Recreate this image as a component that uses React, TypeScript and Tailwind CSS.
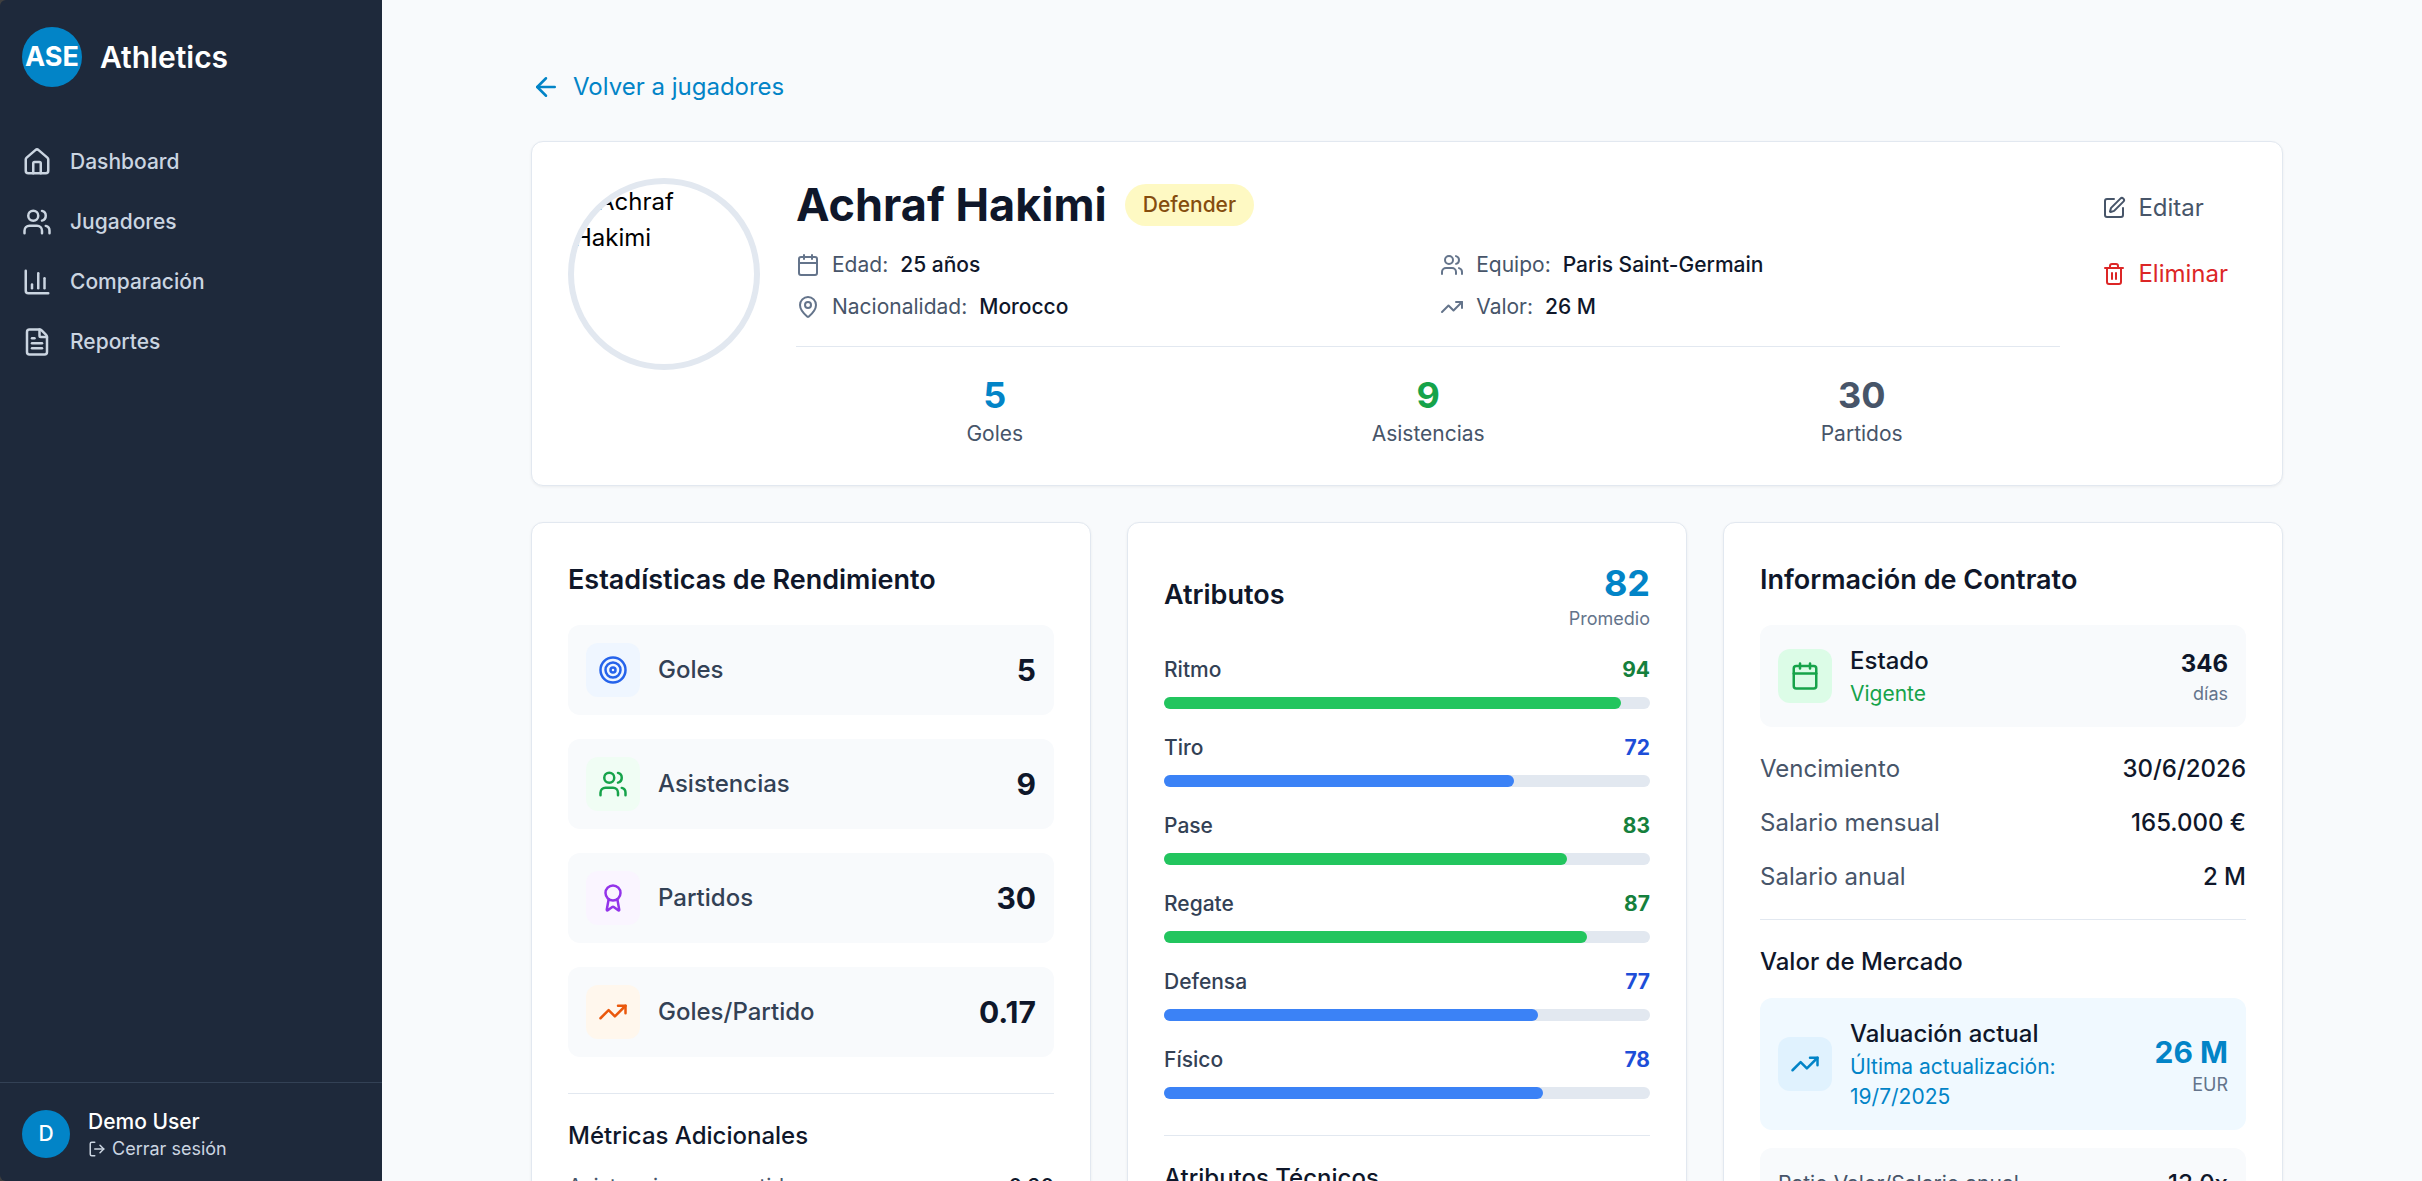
import type { ReactNode } from "react";
import {
  ArrowLeft,
  Award,
  Calendar,
  ChartColumn,
  FileText,
  House,
  LogOut,
  MapPin,
  SquarePen,
  Target,
  Trash2,
  TrendingUp,
  Users,
  type LucideIcon,
} from "lucide-react";

const navItems: { label: string; icon: LucideIcon }[] = [
  { label: "Dashboard", icon: House },
  { label: "Jugadores", icon: Users },
  { label: "Comparación", icon: ChartColumn },
  { label: "Reportes", icon: FileText },
];

const facts: { label: string; value: string; icon: LucideIcon }[] = [
  { label: "Edad:", value: "25 años", icon: Calendar },
  { label: "Equipo:", value: "Paris Saint-Germain", icon: Users },
  { label: "Nacionalidad:", value: "Morocco", icon: MapPin },
  { label: "Valor:", value: "26 M", icon: TrendingUp },
];

const totals = [
  { label: "Goles", value: "5", color: "text-[#0284c7]" },
  { label: "Asistencias", value: "9", color: "text-[#16a34a]" },
  { label: "Partidos", value: "30", color: "text-[#475569]" },
];

const performance: { label: string; value: string; icon: LucideIcon; tone: string }[] = [
  { label: "Goles", value: "5", icon: Target, tone: "bg-[#eff6ff] text-[#2563eb]" },
  { label: "Asistencias", value: "9", icon: Users, tone: "bg-[#f0fdf4] text-[#16a34a]" },
  { label: "Partidos", value: "30", icon: Award, tone: "bg-[#faf5ff] text-[#9333ea]" },
  { label: "Goles/Partido", value: "0.17", icon: TrendingUp, tone: "bg-[#fff7ed] text-[#ea580c]" },
];

const attributes = [
  { label: "Ritmo", value: 94 },
  { label: "Tiro", value: 72 },
  { label: "Pase", value: 83 },
  { label: "Regate", value: 87 },
  { label: "Defensa", value: 77 },
  { label: "Físico", value: 78 },
];

const contract = [
  { label: "Vencimiento", value: "30/6/2026" },
  { label: "Salario mensual", value: "165.000 €" },
  { label: "Salario anual", value: "2 M" },
];

function Card({ children }: { children: ReactNode }) {
  return (
    <section className="rounded-xl border border-[#e2e8f0] bg-white p-9 shadow-[0_1px_3px_rgba(0,0,0,0.06)]">
      {children}
    </section>
  );
}

function CardTitle({ children }: { children: ReactNode }) {
  return <h2 className="text-[27px] leading-[42px] font-semibold text-[#0f172a]">{children}</h2>;
}

function SubTitle({ children }: { children: ReactNode }) {
  return <h3 className="mb-[18px] text-2xl leading-9 font-medium text-[#0f172a]">{children}</h3>;
}

function IconTile({ icon: Icon, tone }: { icon: LucideIcon; tone: string }) {
  return (
    <div className={`shrink-0 rounded-xl p-3 ${tone}`}>
      <Icon size={30} />
    </div>
  );
}

function Sidebar() {
  return (
    <div className="w-[382px] shrink-0 bg-[#3f3f3f]">
      <aside className="flex h-full flex-col rounded-l-md bg-[#1e293b]">
        <div className="flex h-[114px] shrink-0 items-center gap-[18px] px-[22px]">
          <div className="flex size-[60px] items-center justify-center rounded-full bg-[#0284c7] text-[27px] leading-[42px] font-bold text-white">
            ASE
          </div>
          <span className="text-3xl leading-[42px] font-semibold text-white">Athletics</span>
        </div>
        <nav className="flex flex-1 flex-col gap-1.5 px-2.5 pt-[21px]">
          {navItems.map(({ label, icon: Icon }) => (
            <a
              key={label}
              href="#"
              className="flex items-center gap-[18px] rounded-lg p-3 text-[21px] leading-[30px] font-medium text-[#cbd5e1]"
            >
              <Icon size={30} />
              {label}
            </a>
          ))}
        </nav>
        <div className="flex items-center gap-[18px] border-t border-[#334155] px-[22px] pt-6 pb-5">
          <div className="flex size-12 items-center justify-center rounded-full bg-[#0284c7] text-[21px] leading-[30px] font-medium text-white">
            D
          </div>
          <div>
            <p className="text-[21px] leading-[30px] font-medium text-white">Demo User</p>
            <button type="button" className="flex items-center gap-1.5 text-lg leading-6 text-[#cbd5e1]">
              <LogOut size={18} />
              Cerrar sesión
            </button>
          </div>
        </div>
      </aside>
    </div>
  );
}

function PlayerHeader() {
  return (
    <Card>
      <div className="flex items-start">
        <div
          role="img"
          aria-label="Achraf Hakimi"
          className="mr-9 size-48 shrink-0 overflow-hidden rounded-full border-6 border-[#e2e8f0] text-2xl leading-9 text-black"
        >
          <span className="inline-block w-6" />
          Achraf Hakimi
        </div>
        <div className="min-w-0 flex-1">
          <div className="mb-[18px] flex items-center gap-[18px]">
            <h1 className="text-[45px] leading-[54px] font-bold text-[#0f172a]">Achraf Hakimi</h1>
            <span className="rounded-full bg-[#fef9c3] px-[18px] py-1.5 text-[21px] leading-[30px] font-medium text-[#854d0e]">
              Defender
            </span>
          </div>
          <dl className="grid grid-cols-2 gap-x-6 gap-y-3 text-[21px] leading-[30px]">
            {facts.map(({ label, value, icon: Icon }) => (
              <div key={label} className="flex items-center gap-3">
                <Icon size={24} className="text-[#64748b]" />
                <dt className="text-[#475569]">{label}</dt>
                <dd className="font-medium text-[#0f172a]">{value}</dd>
              </div>
            ))}
          </dl>
          <div className="mt-6 grid grid-cols-3 gap-9 border-t border-[#e2e8f0] pt-6 text-center">
            {totals.map(({ label, value, color }) => (
              <div key={label}>
                <p className={`text-4xl leading-[48px] font-bold ${color}`}>{value}</p>
                <p className="text-[21px] leading-[30px] text-[#475569]">{label}</p>
              </div>
            ))}
          </div>
        </div>
        <div className="ml-6 flex flex-col gap-1.5 text-2xl leading-9">
          <button type="button" className="flex items-center gap-3 px-[18px] py-3 text-[#475569]">
            <SquarePen size={24} />
            Editar
          </button>
          <button type="button" className="flex items-center gap-3 px-[18px] py-3 text-[#dc2626]">
            <Trash2 size={24} />
            Eliminar
          </button>
        </div>
      </div>
    </Card>
  );
}

function PerformanceCard() {
  return (
    <Card>
      <CardTitle>Estadísticas de Rendimiento</CardTitle>
      <div className="mt-6 flex flex-col gap-6">
        {performance.map(({ label, value, icon, tone }) => (
          <div key={label} className="flex items-center gap-[18px] rounded-xl bg-[#f8fafc] p-[18px]">
            <IconTile icon={icon} tone={tone} />
            <span className="flex-1 text-2xl leading-9 font-medium text-[#334155]">{label}</span>
            <span className="text-3xl leading-[42px] font-bold text-[#0f172a]">{value}</span>
          </div>
        ))}
      </div>
      <div className="mt-9 border-t border-[#e2e8f0] pt-6">
        <SubTitle>Métricas Adicionales</SubTitle>
        <div className="flex justify-between text-[21px] leading-[30px]">
          <span className="text-[#475569]">Asistencias por partido</span>
          <span className="font-medium text-[#0f172a]">0.30</span>
        </div>
      </div>
    </Card>
  );
}

function AttributesCard() {
  return (
    <Card>
      <div className="flex items-center justify-between">
        <CardTitle>Atributos</CardTitle>
        <div className="text-right">
          <p className="text-4xl leading-[48px] font-bold text-[#0284c7]">82</p>
          <p className="text-lg leading-6 text-[#64748b]">Promedio</p>
        </div>
      </div>
      <div className="mt-6 flex flex-col gap-6">
        {attributes.map(({ label, value }) => (
          <div key={label}>
            <div className="mb-3 flex justify-between text-[21px] leading-[30px]">
              <span className="font-medium text-[#334155]">{label}</span>
              <span className={`font-bold ${value >= 80 ? "text-[#15803d]" : "text-[#1d4ed8]"}`}>{value}</span>
            </div>
            <div className="h-3 rounded-full bg-[#e2e8f0]">
              <div
                className={`h-3 rounded-full ${value >= 80 ? "bg-[#22c55e]" : "bg-[#3b82f6]"}`}
                style={{ width: `${value}%` }}
              />
            </div>
          </div>
        ))}
      </div>
      <div className="mt-9 border-t border-[#e2e8f0] pt-6">
        <SubTitle>Atributos Técnicos</SubTitle>
      </div>
    </Card>
  );
}

function ContractCard() {
  return (
    <Card>
      <CardTitle>Información de Contrato</CardTitle>
      <div className="mt-6 flex items-center gap-[18px] rounded-xl bg-[#f8fafc] p-[18px]">
        <IconTile icon={Calendar} tone="bg-[#dcfce7] text-[#16a34a]" />
        <div className="flex-1">
          <p className="text-2xl leading-9 font-medium text-[#0f172a]">Estado</p>
          <p className="text-[21px] leading-[30px] text-[#16a34a]">Vigente</p>
        </div>
        <div className="text-right">
          <p className="text-2xl leading-9 font-bold text-[#0f172a]">346</p>
          <p className="text-lg leading-6 text-[#64748b]">días</p>
        </div>
      </div>
      <dl className="mt-6 flex flex-col gap-[18px] text-2xl leading-9">
        {contract.map(({ label, value }) => (
          <div key={label} className="flex justify-between">
            <dt className="text-[#475569]">{label}</dt>
            <dd className="font-medium text-[#0f172a]">{value}</dd>
          </div>
        ))}
      </dl>
      <div className="mt-6 border-t border-[#e2e8f0] pt-6">
        <SubTitle>Valor de Mercado</SubTitle>
        <div className="flex items-center gap-[18px] rounded-xl bg-[#f0f9ff] p-[18px]">
          <IconTile icon={TrendingUp} tone="bg-[#e0f2fe] text-[#0284c7]" />
          <div className="flex-1">
            <p className="text-2xl leading-9 font-medium text-[#0f172a]">Valuación actual</p>
            <p className="text-[21px] leading-[30px] text-[#0284c7]">Última actualización: 19/7/2025</p>
          </div>
          <div className="shrink-0 text-right">
            <p className="text-3xl leading-[42px] font-bold text-[#0284c7]">26 M</p>
            <p className="text-lg leading-6 text-[#64748b]">EUR</p>
          </div>
        </div>
        <div className="mt-[18px] flex items-center justify-between rounded-xl bg-[#f8fafc] p-[18px]">
          <span className="text-[21px] leading-[30px] text-[#475569]">Ratio Valor/Salario anual</span>
          <span className="text-2xl leading-9 font-medium text-[#0f172a]">13.0x</span>
        </div>
      </div>
    </Card>
  );
}

export default function App() {
  return (
    <div className="flex h-screen overflow-hidden bg-[#f8fafc] font-['Inter',sans-serif]">
      <Sidebar />
      <main className="min-w-0 flex-1 overflow-y-auto pt-[69px] pb-9 pl-2.5 [scrollbar-width:none]">
        <div className="mx-auto flex max-w-[1752px] flex-col gap-9">
          <a href="#" className="flex items-center gap-3 self-start text-2xl leading-9 text-[#0284c7]">
            <ArrowLeft size={30} />
            Volver a jugadores
          </a>
          <PlayerHeader />
          <div className="grid grid-cols-3 gap-9">
            <PerformanceCard />
            <AttributesCard />
            <ContractCard />
          </div>
        </div>
      </main>
    </div>
  );
}
